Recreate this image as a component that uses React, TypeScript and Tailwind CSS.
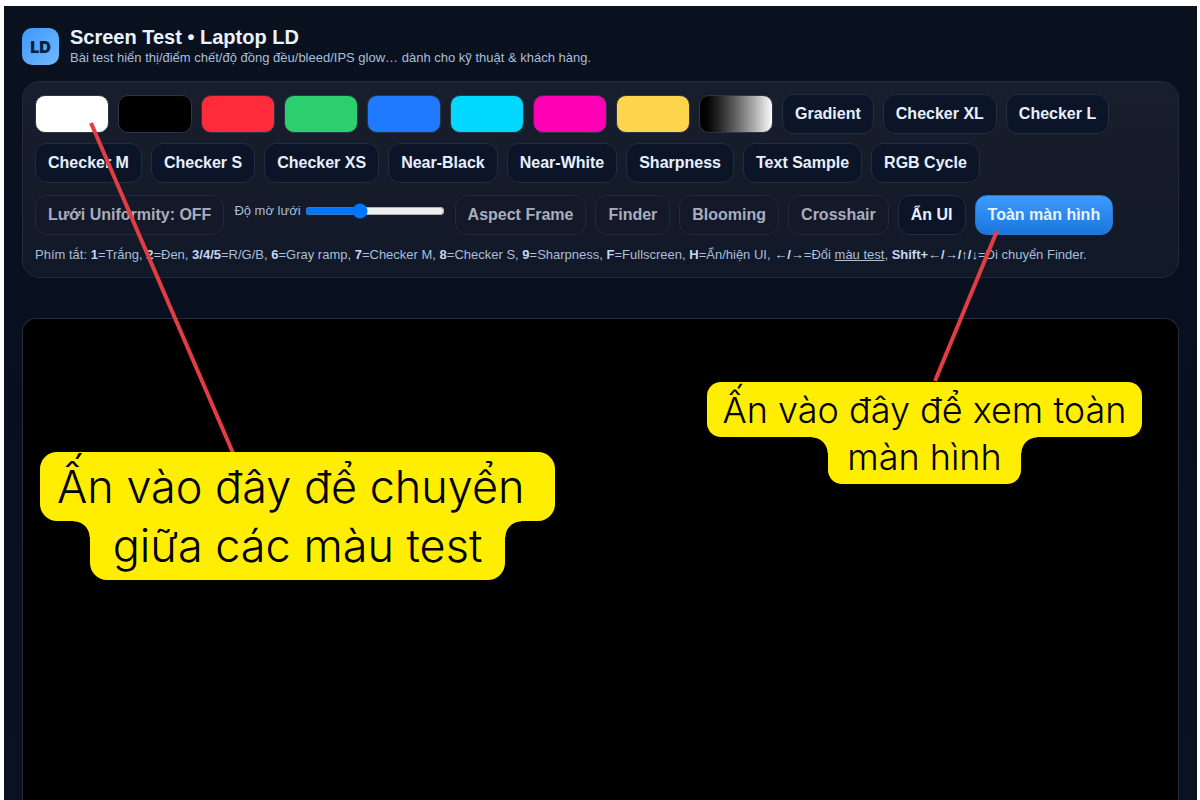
import React, { useState } from 'react';
import clsx from 'clsx';

const swatches = [
  { name: 'Trắng', color: 'bg-white' },
  { name: 'Đen', color: 'bg-black' },
  { name: 'Đỏ', color: 'bg-[#ff2a3a]' },
  { name: 'Xanh lá', color: 'bg-[#2ccf6d]' },
  { name: 'Xanh dương', color: 'bg-[#1f7aff]' },
  { name: 'Cyan', color: 'bg-[#00d8ff]' },
  { name: 'Magenta', color: 'bg-[#ff00b4]' },
  { name: 'Vàng', color: 'bg-[#ffd54d]' },
  { name: 'Gray ramp', color: 'bg-linear-to-r from-black to-white' },
];

const patterns = [
  'Gradient',
  'Checker XL',
  'Checker L',
  'Checker M',
  'Checker S',
  'Checker XS',
  'Near-Black',
  'Near-White',
  'Sharpness',
  'Text Sample',
  'RGB Cycle',
];

const tools = ['Aspect Frame', 'Finder', 'Blooming', 'Crosshair'];

type ToolButtonProps = {
  label: string;
  variant?: 'solid' | 'muted' | 'primary';
};

const ToolButton: React.FC<ToolButtonProps> = ({ label, variant = 'solid' }) => (
  <button
    type="button"
    className={clsx(
      'h-10 px-3 rounded-xl border text-base font-bold whitespace-nowrap',
      variant === 'solid' && 'bg-[#0c1527] border-[#222d3f] text-[#e8f0ff]',
      variant === 'muted' && 'bg-[#131929] border-[#20283a] text-[#a9aebd]',
      variant === 'primary' &&
        'bg-linear-to-b from-[#3d9bff] to-[#1976dc] border-[#2b78cc] text-[#e8f3ff]',
    )}
  >
    {label}
  </button>
);

const Header: React.FC = () => (
  <header className="flex items-center gap-[11px]">
    <div className="size-[37px] rounded-[10px] bg-linear-to-br from-[#3d98fb] to-[#72b9ff] flex items-center justify-center font-['Inter',sans-serif] font-black text-base text-[#06203f]">
      LD
    </div>
    <div>
      <h1 className="text-xl leading-[23px] font-bold text-[#eaf2ff]">Screen Test • Laptop LD</h1>
      <p className="text-[13px] leading-[18px] text-[#a9bfda]">
        Bài test hiển thị/điểm chết/độ đồng đều/bleed/IPS glow… dành cho kỹ thuật &amp; khách hàng.
      </p>
    </div>
  </header>
);

const Shortcuts: React.FC = () => (
  <p className="mt-3 text-[13px] leading-4 text-[#a9bfda] [&_b]:text-[#c3d8f2]">
    Phím tắt: <b>1</b>=Trắng, <b>2</b>=Đen, <b>3/4/5</b>=R/G/B, <b>6</b>=Gray ramp, <b>7</b>=Checker
    M, <b>8</b>=Checker S, <b>9</b>=Sharpness, <b>F</b>=Fullscreen, <b>H</b>=Ẩn/hiện UI, <b>←/→</b>
    =Đổi <u>màu test</u>, <b>Shift+←/→/↑/↓</b>=Di chuyển Finder.
  </p>
);

const ControlPanel: React.FC = () => {
  const [opacity, setOpacity] = useState(38);

  return (
    <section className="mt-[14px] px-3 pt-3 pb-[14px] rounded-[18px] border border-[#222c3e] bg-linear-to-b from-[#181e2c] to-[#111827]">
      <div className="flex flex-wrap items-center gap-[9px]">
        {swatches.map((s) => (
          <button
            key={s.name}
            type="button"
            aria-label={s.name}
            className={clsx('w-[74px] h-[38px] rounded-[10px] border border-[#2a3548] bg-origin-border', s.color)}
          />
        ))}
        {patterns.map((p) => (
          <ToolButton key={p} label={p} />
        ))}
      </div>
      <div className="mt-3 flex flex-wrap items-center gap-[9px]">
        <ToolButton label="Lưới Uniformity: OFF" variant="muted" />
        <div className="flex items-center gap-1 px-px pb-2">
          <label htmlFor="grid-opacity" className="text-[13px] leading-4 text-[#a9bfda]">
            Độ mờ lưới
          </label>
          <input
            id="grid-opacity"
            type="range"
            min={0}
            max={100}
            value={opacity}
            onChange={(e) => setOpacity(Number(e.target.value))}
            className="w-[140px] accent-[#0075ff]"
          />
        </div>
        {tools.map((t) => (
          <ToolButton key={t} label={t} variant="muted" />
        ))}
        <ToolButton label="Ẩn UI" />
        <ToolButton label="Toàn màn hình" variant="primary" />
      </div>
      <Shortcuts />
    </section>
  );
};

// Inner corners where the narrow second line meets the wide first line
const leftNotch = 'size-4 bg-[radial-gradient(circle_at_0_100%,transparent_15px,#ffee00_16px)]';
const rightNotch = 'size-4 bg-[radial-gradient(circle_at_100%_100%,transparent_15px,#ffee00_16px)]';

const ColorNote: React.FC = () => (
  <div className="absolute left-9 top-[446px] flex flex-col items-center whitespace-nowrap font-['Inter',sans-serif] font-light text-[45px] text-black">
    <div className="w-[515px] h-[69px] pl-[17px] rounded-[17px] bg-[#ffee00] leading-[70px]">
      Ấn vào đây để chuyển
    </div>
    <div className="flex items-start">
      <div className={leftNotch} />
      <div className="w-[415px] h-[59px] rounded-b-[17px] bg-[#ffee00] text-center leading-[50px]">
        giữa các màu test
      </div>
      <div className={rightNotch} />
    </div>
  </div>
);

const FullscreenNote: React.FC = () => (
  <div className="absolute left-[703px] top-[376px] flex flex-col items-center whitespace-nowrap font-['Inter',sans-serif] font-light text-[36px] text-black">
    <div className="w-[435px] h-[55px] rounded-[14px] bg-[#ffee00] text-center leading-[56px]">
      Ấn vào đây để xem toàn
    </div>
    <div className="flex items-start">
      <div className={leftNotch} />
      <div className="w-[193px] h-[47px] rounded-b-[14px] bg-[#ffee00] text-center leading-[40px]">
        màn hình
      </div>
      <div className={rightNotch} />
    </div>
  </div>
);

const Pointers: React.FC = () => (
  <svg
    className="absolute left-0 top-0 pointer-events-none"
    width="1193"
    height="460"
    fill="none"
    stroke="#e23d42"
    strokeWidth="4"
    aria-hidden="true"
  >
    <path d="M87 117 229 447" />
    <path d="M993 225 931 375" />
  </svg>
);

const App: React.FC = () => {
  return (
    <div className="min-h-screen flex flex-col bg-white pt-[6px] pl-1 pr-[3px] font-['Liberation_Sans',Arial,sans-serif]">
      <main className="relative grow flex flex-col px-[18px] pt-5 bg-linear-to-b from-[#0a111e] via-[#080f1f] to-[#0a1222]">
        <Header />
        <ControlPanel />
        <div className="mt-10 grow rounded-t-[14px] border border-b-0 border-[#222c3e] bg-black" />
        <Pointers />
        <ColorNote />
        <FullscreenNote />
      </main>
    </div>
  );
};

export default App;
